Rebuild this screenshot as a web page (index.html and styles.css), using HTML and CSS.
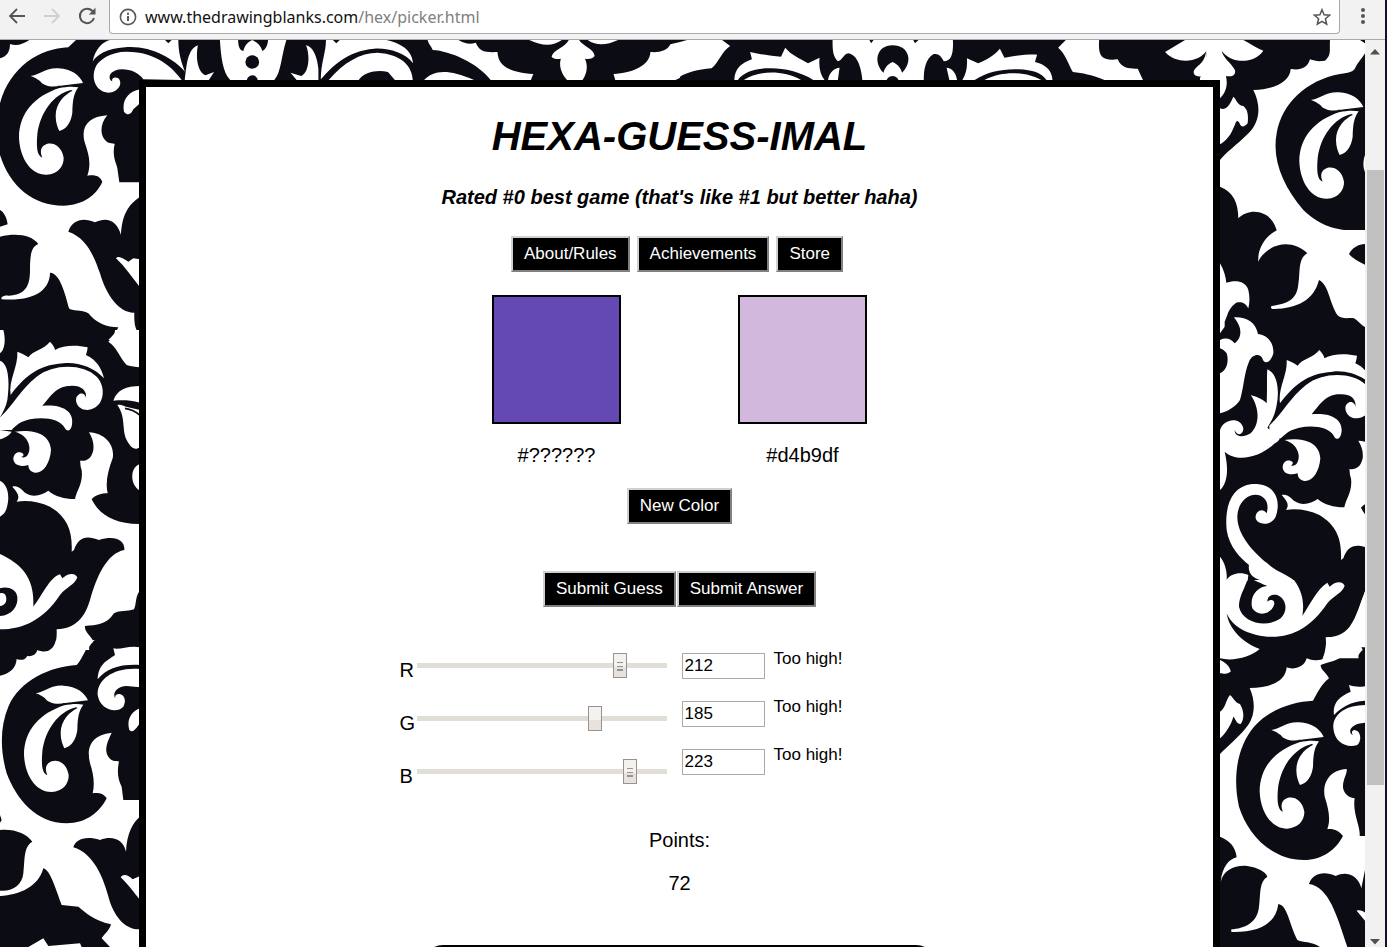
FILE: index.html
```
<!DOCTYPE html>
<html lang="en">
<head>
<meta charset="utf-8">
<title>Hexa-Guess-Imal</title>
<link rel="stylesheet" href="styles.css">
</head>
<body>
<header class="toolbar">
  <button class="tool" aria-label="Back"><svg width="18" height="18" viewBox="0 0 18 18" fill="none" stroke="#555" stroke-width="1.8"><path d="M17 9H2M9 2L2 9l7 7"/></svg></button>
  <button class="tool" aria-label="Forward" disabled><svg width="18" height="18" viewBox="0 0 18 18" fill="none" stroke="#cfcfcf" stroke-width="1.8"><path d="M1 9h15M9 2l7 7-7 7"/></svg></button>
  <button class="tool" aria-label="Reload"><svg width="18" height="18" viewBox="0 0 18 18" fill="none" stroke="#555" stroke-width="2"><path d="M14.800 4.500A7.200 7.200 0 1 0 16 11"/><path d="M17.500 .8v6.700h-6.700z" fill="#555" stroke="none"/></svg></button>
  <div class="address">
    <svg width="18" height="18" viewBox="0 0 18 18" fill="none" stroke="#5a5a5a"><circle cx="9" cy="9" r="7.600" stroke-width="1.600"/><path d="M9 8v5M9 4.700v2" stroke-width="2"/></svg>
    <a class="url" href="#top">www.thedrawingblanks.com<span class="path">/hex/picker.html</span></a>
    <button class="tool star" aria-label="Bookmark"><svg width="18" height="18" viewBox="0 0 18 18" fill="none" stroke="#555" stroke-width="1.500"><path d="M9 1.700l2.100 5.100 5.500.4-4.200 3.600 1.300 5.400L9 13.300l-4.700 2.900 1.300-5.400L1.400 7.200l5.500-.4z"/></svg></button>
  </div>
  <button class="tool more" aria-label="Menu"><svg width="6" height="18" viewBox="0 0 6 18" fill="#555"><circle cx="3" cy="3" r="2"/><circle cx="3" cy="9" r="2"/><circle cx="3" cy="15" r="2"/></svg></button>
</header>
<div class="window" id="top">
  <div class="page">
    <svg class="damask" viewBox="0 40 1365 907" preserveAspectRatio="xMidYMin slice" aria-hidden="true">
      <defs>
        <g id="sprig">
          <path d="M107 160C140 155 150 135 190 137C230 138 255 160 264 181L196 189C170 195 145 190 135 175C125 168 118 163 107 160Z"/>
          <path d="M193 196C120 220 72 270 72 345C75 410 110 457 155 456C190 454 207 430 206 405C200 370 175 358 155 364C138 370 133 385 142 405C125 400 124 370 127 335C135 270 175 215 228 202L233 204C210 215 182 240 182 280C182 300 188 315 193 325C215 318 228 300 232 270C233 235 235 215 250 194C230 190 210 193 193 196Z"/>
          <path d="M189 190L198 193" stroke="#0c0c14" stroke-width="3"/>
        </g>
        <g id="plume">
          <path d="M32 195C25 150 55 110 52 65C65 70 75 75 85 82C100 60 130 60 150 35C160 45 165 55 165 60C190 45 230 45 263 52C262 62 260 68 258 75C290 90 305 115 312 145C280 110 230 95 190 100C110 105 70 145 32 195Z"/>
          <path d="M0 262C40 225 60 180 110 140C160 100 250 100 290 140C320 170 315 235 262 240C230 240 220 205 235 195C245 185 258 195 258 205C262 180 240 165 210 168C170 168 150 200 127 228C170 222 225 235 216 285C212 305 200 305 195 295C180 265 130 260 90 268C60 275 50 285 35 300L0 300Z"/>
          <path d="M45 305C90 298 150 305 153 360C150 400 130 430 105 428C90 425 85 415 85 405C60 412 40 405 40 385C42 365 62 362 70 372C72 378 66 382 62 380C75 388 90 375 88 350C85 325 65 310 45 305Z"/>
          <path d="M267 307C320 310 345 350 338 385C325 420 315 455 323 490C305 490 285 495 275 508C295 550 340 582 417 582L417 785C405 805 410 820 402 838C380 845 360 840 342 850C320 885 290 885 255 888C252 905 275 920 280 935C270 945 265 950 268 960L160 960C172 930 170 910 170 898C230 895 255 860 270 810C290 740 320 670 373 660C375 630 345 615 297 630C260 615 235 620 222 660L215 665C218 600 200 560 150 530C120 515 80 510 50 515C60 500 55 490 37 470C55 465 65 480 75 488C100 505 125 495 145 482C165 500 200 508 225 507C230 480 250 460 245 420C240 405 242 400 240 392C260 395 275 385 280 360C282 340 278 325 267 307Z"/>
        </g>
        <clipPath id="right"><rect x="1200" y="40" width="165" height="907"/></clipPath>
      </defs>
      <rect class="ink" y="40" width="1365" height="907"/>
      <g class="lace">
        <g transform="translate(0 40) scale(.33333)">
          <path d="M88 0L228 0L205 22C120 25 30 80 0 190L0 55C20 50 30 35 30 12C50 20 70 12 88 0Z"/>
          <path d="M0 345C30 440 100 497 190 497C250 495 290 465 307 425C300 408 285 403 262 407C275 370 265 340 255 310C240 260 265 230 322 226C300 250 300 285 315 300C325 312 335 308 344 312C335 350 350 370 352 385L358 427L420 427L420 470C375 500 365 540 363 585C350 540 320 530 285 547C250 530 215 540 205 575C265 595 285 660 300 700C320 770 360 820 403 818C402 850 405 870 420 885L420 900L325 900C340 885 350 875 355 862C320 862 290 850 265 820C245 808 215 815 207 805C195 760 180 700 150 698C150 745 110 785 5 778C0 770 15 765 25 767C75 765 90 740 90 690C90 640 95 620 115 612C95 585 50 578 0 590L0 560L23 553C20 530 10 515 0 510Z"/>
          <path d="M330 0L495 0L505 10L515 0L535 0C535 40 545 70 555 95C520 55 450 15 375 22C320 25 290 45 278 65C285 25 310 5 330 0Z"/>
          <path d="M545 120C520 85 470 35 380 35C330 35 300 60 290 75C270 110 285 155 325 158C355 158 370 130 355 115C342 108 332 118 338 125C322 118 325 90 365 88C395 88 417 100 430 118Z"/>
          <path d="M420 148C385 155 365 180 372 215C385 230 395 220 400 208L420 190ZM348 655C355 645 370 655 385 665L400 655L420 658L420 742C395 710 375 680 348 655ZM0 870C10 880 12 890 12 900L0 900Z"/>
          <use href="#sprig" x="-15" y="-52"/>
        </g>
        <g transform="translate(0 330) scale(.33333)">
          <use href="#plume"/>
          <path d="M0 0L10 0C18 30 14 60 0 70ZM0 92C25 100 30 150 22 210C18 230 10 245 0 262ZM0 300L35 305C25 320 10 325 0 328ZM0 452C25 465 30 500 20 535C15 550 8 555 0 560Z"/>
          <path d="M345 0C345 15 335 25 325 35C350 50 360 85 380 105C395 110 405 110 420 112L420 0ZM340 212C350 180 380 168 420 168L420 218C390 210 365 210 340 212ZM352 225C362 222 368 226 378 230L420 240L420 350C405 365 390 350 380 330C365 300 378 260 352 225Z"/>
          <path d="M420 402C390 410 388 465 420 482Z"/>
          <path d="M375 235C395 238 408 245 420 256" fill="none" stroke="#0c0c14" stroke-width="5"/>
          <path d="M0 672C60 700 105 740 100 830C125 800 150 740 180 733L187 745C205 728 225 728 232 742C225 765 200 770 180 795C130 870 70 898 0 898L0 858C35 855 55 830 52 800C48 775 20 768 0 775ZM0 790C15 785 22 800 18 815C12 828 0 828 0 828Z"/>
        </g>
        <g transform="translate(0 640) scale(.33333)">
          <path d="M168 0C160 35 135 40 112 30C108 45 95 50 82 48C75 60 65 62 50 57C48 85 30 100 0 107L0 570C40 565 80 580 97 605C70 620 75 660 70 700C66 735 40 755 0 752L0 768C60 765 115 740 130 685C150 690 165 740 185 795L235 800C260 820 280 840 333 853C330 870 310 885 305 895L330 921L420 921L420 868C370 870 340 820 328 780C310 710 280 640 220 622C225 600 255 585 300 600C340 585 370 600 378 635C380 580 400 545 420 530L420 480L370 480L365 440C355 420 350 400 357 364C345 362 335 365 325 350C310 330 325 300 335 278C275 285 258 320 270 370C280 400 285 430 278 460C295 458 310 460 320 475C300 515 260 550 200 550C110 550 50 480 20 400C0 330 0 260 25 200C60 120 150 80 230 75C250 55 260 10 285 0Z"/>
          <path d="M293 118C295 70 325 60 345 45L340 25C360 30 390 15 420 22L420 75C360 72 320 85 293 118ZM420 87C340 80 290 120 293 165C300 210 350 222 370 200C385 170 360 155 348 165C342 172 347 178 352 180C335 172 340 140 380 138L420 142ZM420 205C390 215 380 245 388 270C398 280 405 270 420 250ZM362 712C370 700 385 705 398 718L420 708L420 780C400 755 385 735 362 712ZM85 921L130 895L145 918L240 910L245 921Z"/>
          <path class="ink" d="M0 525L5 540L0 548Z"/>
          <use href="#sprig"/>
        </g>
        <g clip-path="url(#right)">
          <g transform="translate(1200 0) scale(.33333)">
            <path d="M390 120C388 150 395 165 375 182C355 185 345 183 330 178C322 205 300 212 272 207C270 245 225 268 160 270C185 320 180 370 140 405C110 435 80 455 60 480L60 560C100 575 115 610 115 655C150 620 220 630 232 700L229 704L495 704L495 692C440 695 370 690 310 630C250 560 215 480 230 400C245 310 320 240 420 222C450 218 460 215 465 205C475 185 490 170 495 160L495 130L480 120Z"/>
            <path d="M0 120L130 120C150 130 170 145 190 152C160 195 90 190 65 152C70 175 90 185 105 210C108 225 95 232 78 228C85 260 75 280 60 295L0 240ZM60 325C75 330 85 325 100 290C110 300 115 318 130 318C145 330 145 350 143 370C130 385 122 380 118 368C108 355 108 370 100 385C90 410 75 425 60 433Z"/>
            <path class="ink" d="M0 165C12 162 20 152 18 150C22 185 10 200 0 235ZM487 120L495 120L495 130Z"/>
            <path d="M497 460C488 480 488 505 497 520Z"/>
            <use href="#sprig" x="226" y="140"/>
          </g>
          <g transform="translate(1214 230) scale(.33333)">
            <path d="M190 0C150 20 130 60 133 95C155 45 230 20 280 70C250 85 260 130 252 170C245 215 210 222 172 228C170 235 172 237 180 237C250 235 300 210 315 150C345 165 345 215 370 255C385 270 405 262 420 265C430 270 440 285 455 292L455 105C435 95 415 85 405 72C415 52 435 42 455 42L455 0Z"/>
            <path d="M18 100C30 120 35 140 37 158C60 150 95 150 103 180C108 200 107 220 103 235C95 220 85 215 70 217C55 225 45 240 40 255L32 275L32 290C25 300 18 310 18 310Z"/>
            <path d="M60 262C95 260 125 275 132 312C165 315 180 345 178 370C170 400 150 405 145 385C140 370 115 370 105 395C90 430 90 470 78 510C65 530 40 545 18 550L18 430C40 420 45 390 38 370C32 362 25 358 18 355L18 330C35 322 50 325 62 340C80 325 90 300 60 262Z"/>
            <path d="M110 495C125 500 145 505 158 520C160 480 158 440 160 418C190 430 197 480 188 525C184 550 175 570 160 593L197 625C195 635 185 638 180 642C140 680 70 700 32 665C45 720 40 760 18 780L18 600C30 565 80 560 88 595C88 615 70 620 62 600C62 620 85 625 110 610C140 580 135 530 110 495Z"/>
            <path d="M135 763C60 755 30 820 38 900C45 950 80 985 105 1005C100 1030 120 1050 150 1052L240 1052C225 1035 185 1025 160 1000C110 960 70 910 70 860C72 810 110 785 140 797C165 810 162 835 158 850C145 830 122 845 125 865C130 885 170 890 185 860C200 820 190 770 135 763ZM18 980C35 1000 40 1030 38 1050C50 1030 80 1025 103 1035L101 1052L18 1052Z"/>
            <use href="#plume" x="166" y="325"/>
          </g>
          <g transform="translate(1214 580) scale(.33333)">
            <path d="M18 0L100 0C90 30 75 50 75 80C85 130 160 145 200 115C225 90 215 55 190 45C170 42 160 50 160 65C170 55 185 60 180 75C170 105 130 110 115 85C105 50 130 20 160 18C140 10 130 5 120 0L240 0C270 40 270 80 265 107C285 80 310 25 340 8L347 20C365 3 385 3 392 17C385 40 360 45 340 70C290 145 230 175 160 170C100 165 55 140 38 100C45 150 90 190 137 207C110 230 60 245 18 235Z"/>
            <path d="M335 172C338 200 335 225 325 238C300 245 285 238 278 235C270 265 235 270 218 262C215 300 180 322 107 324C125 365 125 410 95 445C75 470 40 500 18 522L18 770C45 780 65 800 68 832C45 838 25 860 20 905C30 870 60 855 100 858C130 862 155 875 160 890C135 905 140 940 135 980C130 1030 90 1045 52 1048L52 1056C130 1058 185 1035 193 972C220 975 225 1030 250 1080C270 1090 290 1082 318 1101L400 1101C370 1010 345 920 285 912C295 880 330 872 365 888C400 870 435 890 442 925L455 860L455 768L437 768C440 740 415 700 422 655C395 650 380 630 390 600C392 590 400 578 398 567C345 570 325 610 332 650C345 690 350 720 340 747C360 745 375 752 387 768C365 810 325 840 270 840C170 840 100 760 75 680C55 590 70 500 120 440C170 385 240 365 297 362C310 340 320 315 345 295C335 275 320 270 320 255C340 245 375 245 400 215C415 200 435 202 455 202L455 30C430 90 420 150 370 170Z"/>
            <path d="M360 405C355 370 375 350 410 335L405 315C420 320 435 322 455 318L455 362C410 365 385 380 360 405ZM455 375C400 375 355 400 358 445C362 490 400 505 430 495C445 480 440 450 420 450C412 452 412 462 418 465C400 460 405 430 455 428ZM18 240C40 250 50 265 50 275C35 285 20 280 18 280ZM18 395C35 385 35 360 48 345C60 355 65 370 78 372C92 395 90 420 80 432C65 430 65 415 58 410C50 440 30 465 18 475ZM428 992C440 988 455 998 455 1000L455 1025Z"/>
            <use href="#sprig" x="65" y="290"/>
          </g>
        </g>
        <g transform="translate(140 36) scale(.3444 .33333)">
          <path d="M130 132C135 100 135 40 168 28C160 70 170 110 190 118L215 108L200 132ZM232 12C235 60 240 110 262 132L390 132C410 110 410 60 425 12ZM518 132L518 100C515 60 500 30 482 28C495 60 490 110 468 120L437 110L455 132Z"/>
          <path d="M540 12L560 12L570 22L580 12L715 12C770 25 790 50 793 82C770 50 720 35 680 38C600 45 560 90 525 130C525 80 540 50 540 12ZM548 132C590 80 640 50 690 50C760 55 790 90 792 132L740 132L720 108C690 100 650 108 635 132ZM825 132C850 105 890 95 970 132Z"/>
          <path d="M835 12L925 12C945 25 960 25 975 20C985 45 1000 50 1038 48C1040 90 1070 108 1142 114L1135 132L1018 132C980 80 900 45 850 42C845 30 838 25 835 12ZM1130 12C1170 32 1200 30 1225 12ZM1300 12C1325 30 1355 28 1388 12ZM1245 12C1235 35 1200 40 1195 62C1205 72 1215 68 1222 68C1215 90 1225 115 1240 132L1285 132C1300 110 1300 85 1292 68C1305 70 1315 68 1320 60C1320 40 1285 30 1275 12ZM1375 114C1430 110 1480 90 1482 48C1510 50 1530 45 1540 25L1568 18L1568 125L1555 132L1380 132Z"/>
          <path class="ink" d="M285 12C285 35 292 45 300 45C305 25 315 18 326 12C337 18 350 25 355 45C365 40 370 30 372 12Z"/>
          <circle class="ink" cx="326" cy="78" r="20"/><circle class="ink" cx="326" cy="134" r="16"/>
        </g>
        <g transform="translate(680 36) scale(.35075 .33333)">
          <path d="M0 18L20 12L120 12L143 30C120 45 110 80 90 97C50 100 20 110 0 122ZM155 132C155 100 175 80 205 70L200 48C230 55 260 60 288 62L300 35C320 60 340 65 365 82L398 65C395 95 400 115 412 132L380 132C340 105 290 95 250 97C210 98 180 110 165 132ZM182 132C220 105 290 100 345 132Z"/>
          <path d="M435 12L540 12L545 22L552 12L665 12L670 22L680 12L778 12C780 50 775 75 752 76C745 60 735 50 722 55C700 70 695 100 695 132L520 132C515 80 500 55 480 52C465 55 462 75 450 76C435 60 435 40 435 12ZM422 132C425 110 440 95 455 95L450 132ZM790 132C787 110 775 95 760 95L768 132Z"/>
          <path d="M1062 132C1060 100 1040 85 1012 78L1018 56C990 55 960 58 925 65L912 38C895 60 875 70 850 82L818 67C820 95 815 115 805 132L840 132C875 108 920 98 965 100C1005 102 1030 110 1045 132ZM1030 132C995 110 925 100 868 132Z"/>
          <path d="M1100 12L1195 12C1192 60 1200 75 1248 70C1260 100 1285 98 1305 98L1320 132L1210 132C1170 115 1150 112 1120 108C1105 80 1100 55 1078 35ZM1383 48L1440 12L1500 12L1500 130L1490 120C1470 125 1462 115 1465 105C1475 85 1495 85 1500 45C1485 75 1420 90 1383 48Z"/>
          <path class="ink" d="M606 28C560 28 550 80 580 110C585 90 600 80 606 78C612 80 628 90 633 110C665 80 655 28 606 28Z"/>
          <circle class="ink" cx="606" cy="138" r="18"/>
        </g>
      </g>
    </svg>
    <main class="card">
      <h1>HEXA-GUESS-IMAL</h1>
      <h3>Rated #0 best game (that's like #1 but better haha)</h3>
      <nav class="menu">
        <button class="btn">About/Rules</button>
        <button class="btn">Achievements</button>
        <button class="btn">Store</button>
      </nav>
      <div class="swatches">
        <figure><div class="swatch target"></div><figcaption>#??????</figcaption></figure>
        <figure><div class="swatch guess"></div><figcaption>#d4b9df</figcaption></figure>
      </div>
      <button class="btn">New Color</button>
      <div class="submit">
        <button class="btn">Submit Guess</button>
        <button class="btn">Submit Answer</button>
      </div>
      <div class="controls">
        <div class="sliders">
          <div class="channel"><label for="r">R</label><input class="slider grip" id="r" type="range" min="0" max="255" value="212"></div>
          <div class="channel"><label for="g">G</label><input class="slider" id="g" type="range" min="0" max="255" value="185"></div>
          <div class="channel"><label for="b">B</label><input class="slider grip" id="b" type="range" min="0" max="255" value="223"></div>
        </div>
        <div class="values">
          <div class="value"><input type="text" aria-label="Red value" value="212"><span>Too high!</span></div>
          <div class="value"><input type="text" aria-label="Green value" value="185"><span>Too high!</span></div>
          <div class="value"><input type="text" aria-label="Blue value" value="223"><span>Too high!</span></div>
        </div>
      </div>
      <p>Points:</p>
      <p>72</p>
      <div class="panel"></div>
    </main>
  </div>
  <div class="scrollbar" aria-hidden="true">
    <svg width="10" height="6" viewBox="0 0 10 6"><path d="M5 0l5 5.500H0z" fill="#505050"/></svg>
    <div class="track"><div class="thumb"></div></div>
    <svg width="10" height="6" viewBox="0 0 10 6"><path d="M5 5.500L10 0H0z" fill="#505050"/></svg>
  </div>
</div>
</body>
</html>
```

FILE: styles.css
```
* { box-sizing: border-box; }
body {
  margin: 0;
  height: 100vh;
  display: flex;
  flex-direction: column;
  overflow: hidden;
  border-right: 2px solid #1d0b2b;
  background: #f1f1f1;
  color: #000;
  font: 20px/24px "Liberation Sans", Arial, sans-serif;
}
.toolbar {
  display: flex;
  align-items: flex-start;
  height: 40px;
  flex: none;
  padding-left: 8px;
  background: #f2f2f2;
  border-bottom: 1px solid #a9a9a9;
}
.tool {
  display: flex;
  flex: none;
  margin: 7px 17px 0 0;
  padding: 0;
  border: 0;
  background: none;
}
.toolbar > .tool:nth-child(3) { margin-right: 13px; }
.address {
  display: flex;
  flex: 1;
  align-items: center;
  height: 34px;
  padding: 0 8px 0 9px;
  background: #fff;
  border: 1px solid #a9a9a9;
  border-top: 0;
  border-radius: 0 0 4px 4px;
}
.address svg { flex: none; }
.url {
  flex: 1;
  padding-left: 8px;
  color: #111;
  font: 16px/24px "Noto Sans", "Open Sans", sans-serif;
  text-decoration: none;
}
.path { color: #808080; }
.tool.star { margin: 0; }
.tool.more { margin: 7px 19px 0 20px; }
.window { display: flex; flex: 1; min-height: 0; }
.page {
  position: relative;
  flex: 1;
  overflow: hidden;
  padding: 40px 145px 0 139px;
}
.damask { position: absolute; inset: 0; width: 100%; height: 100%; }
.lace { fill: #fff; }
.ink { fill: #0c0c14; }
.card {
  position: relative;
  display: flex;
  flex-direction: column;
  align-items: center;
  padding-bottom: 40px;
  background: #fff;
  border: 7px solid #000;
}
h1 { margin: 26px 0 0; font: italic bold 40px/46px "Liberation Sans", Arial, sans-serif; }
h3 { margin: 26px 0 0; font: italic bold 20px/24px "Liberation Sans", Arial, sans-serif; }
.menu { display: flex; gap: 7px; margin: 27px 5px 23px 0; }
.btn {
  height: 36px;
  padding: 0 11px;
  border: 2px solid;
  border-color: #d0d0d0 #808080 #808080 #d0d0d0;
  background: #000;
  color: #fff;
  font: 17px/24px "Liberation Sans", Arial, sans-serif;
}
.swatches { display: flex; gap: 117px; margin-bottom: 21px; }
figure { margin: 0; text-align: center; }
.swatch { width: 129px; height: 129px; margin-bottom: 19px; border: 2px solid #000; }
.target { background: #6449b5; }
.guess { background: #d2b8dd; }
.submit { display: flex; gap: 1px; margin: 47px 0 46px; }
.controls { display: flex; gap: 15px; margin: 0 117px 44px 0; }
.sliders { display: grid; gap: 28px; align-content: start; }
.channel { display: grid; grid-template-columns: 17px 250px; height: 25px; }
.channel label { padding-top: 5px; }
.slider {
  width: 250px;
  height: 25px;
  margin: 0;
  appearance: none;
  background: linear-gradient(#e1ddd7, #e1ddd7) center / 100% 5px no-repeat;
}
.slider::-webkit-slider-thumb {
  appearance: none;
  width: 14px;
  height: 25px;
  border: 1px solid #98918c;
  background: linear-gradient(#f4f2ee 55%, #e8e2de 55%);
}
.slider.grip::-webkit-slider-thumb {
  background:
    linear-gradient(#98918c 1px, transparent 1px 4px, #98918c 4px 5px, transparent 5px 7px, #98918c 7px) center 8px / 6px 9px no-repeat,
    linear-gradient(#f4f2ee 55%, #e8e2de 55%);
}
.values { display: grid; gap: 22px; align-content: start; font-size: 17px; }
.value { display: flex; gap: 9px; height: 26px; }
.value input {
  width: 83px;
  padding: 0 2px;
  border: 1px solid #a9a9a9;
  background: #fff;
  color: #000;
  font: 17px/20px "Liberation Sans", Arial, sans-serif;
}
.value span { margin-top: -6px; }
p { margin: 0 0 19px; }
.panel {
  width: 48%;
  height: 120px;
  margin-top: 31px;
  border: 2px solid #000;
  border-radius: 20px;
}
.scrollbar {
  display: flex;
  flex: none;
  flex-direction: column;
  align-items: center;
  width: 20px;
  padding: 9px 0 2px;
}
.track { flex: 1; width: 17px; padding-top: 115px; }
.thumb { height: 80%; background: #c1c1c1; }
```
